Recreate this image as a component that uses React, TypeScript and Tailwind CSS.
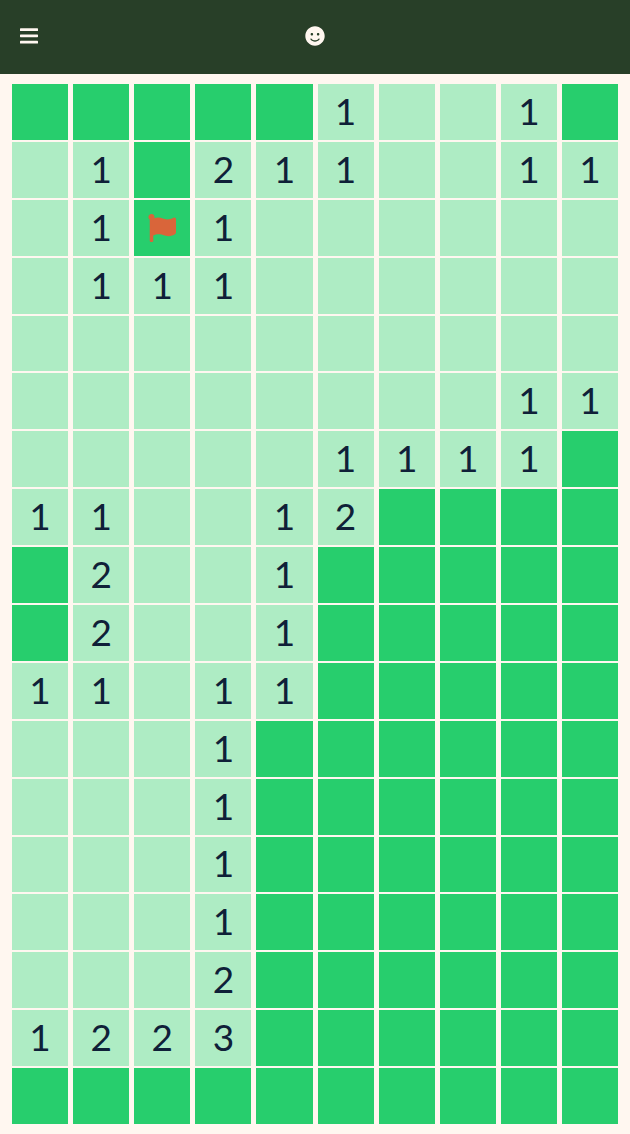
import { FaFlag, FaSmile } from "react-icons/fa";

const rows = [
  "CCCCC1..1C",
  ".1C211..11",
  ".1F1......",
  ".111......",
  "..........",
  "........11",
  ".....1111C",
  "11..12CCCC",
  "C2..1CCCCC",
  "C2..1CCCCC",
  "11.11CCCCC",
  "...1CCCCCC",
  "...1CCCCCC",
  "...1CCCCCC",
  "...1CCCCCC",
  "...2CCCCCC",
  "1223CCCCCC",
  "CCCCCCCCCC",
];

function Cell({ v }: { v: string }) {
  if (v === "F") {
    return (
      <div className="flex items-center justify-center bg-[#27ce6d]">
        <FaFlag className="text-[#d9653a]" size={28} />
      </div>
    );
  }
  if (v === "C") return <div className="bg-[#27ce6d]" />;
  return (
    <div className="flex items-center justify-center bg-[#aeecc4] pb-[3px] text-[37px] font-normal leading-none text-[#0f2038]">
      {v === "." ? null : v}
    </div>
  );
}

export default function App() {
  return (
    <div className="flex h-[1134px] w-[630px] flex-col overflow-hidden bg-[#fff7f0] font-['Lato',sans-serif]">
      <header className="grid h-[74px] shrink-0 grid-cols-[1fr_auto_1fr] items-center bg-[#283f28] px-[20px] pb-[2px] text-[#fff7f0]">
        <svg width="18" height="16" viewBox="0 0 18 16" fill="currentColor">
          <rect x="0" y="0.3" width="18" height="2.8" rx="0.6" />
          <rect x="0" y="6.4" width="18" height="2.8" rx="0.6" />
          <rect x="0" y="12.7" width="18" height="2.8" rx="0.6" />
        </svg>
        <FaSmile size={20} />
        <div />
      </header>
      <main className="ml-[12.05px] mt-[10px] grid h-[1040px] w-[606px] grid-cols-10 grid-rows-[repeat(18,minmax(0,1fr))] gap-x-[5px] gap-y-[2px]">
        {rows.flatMap((r, y) => r.split("").map((v, x) => <Cell key={`${y}-${x}`} v={v} />))}
      </main>
    </div>
  );
}
